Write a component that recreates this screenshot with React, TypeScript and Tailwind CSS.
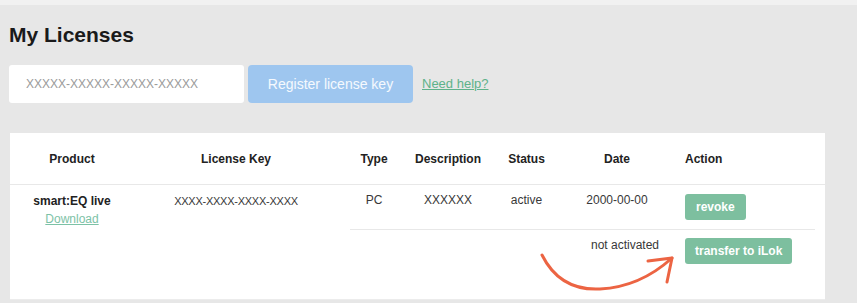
import React from "react";

const headers = [
  { label: "Product", align: "text-center" },
  { label: "License Key", align: "text-center" },
  { label: "Type", align: "text-center" },
  { label: "Description", align: "text-center" },
  { label: "Status", align: "text-center" },
  { label: "Date", align: "text-center" },
  { label: "Action", align: "text-left pl-[18px]" },
];

function Arrow() {
  return (
    <svg
      className="pointer-events-none absolute left-[520px] top-[110px]"
      width="160"
      height="60"
      viewBox="0 0 160 60"
      fill="none"
    >
      <path
        d="M12 12 Q30 48 70 46 Q110 44 142 15"
        stroke="#ec6443"
        strokeWidth="3"
        strokeLinecap="round"
      />
      <path
        d="M118 18 L142 15 L137 39"
        stroke="#ec6443"
        strokeWidth="3"
        strokeLinecap="round"
        strokeLinejoin="round"
      />
    </svg>
  );
}

export default function App() {
  return (
    <div
      className="min-h-[303px] w-full bg-[#e7e7e7] text-[12px] text-[#383838]"
      style={{ fontFamily: '"Liberation Sans", Arial, sans-serif' }}
    >
      <div className="h-[5px] bg-[#f1f1f1]" />

      <div className="px-[9px]">
        <h1 className="mt-[18px] text-[21px] font-bold leading-[24px] text-[#1a1a1a]">
          My Licenses
        </h1>

        <div className="mt-[18px] flex items-center">
          <div className="flex h-[38px] w-[235px] items-center rounded-[3px] bg-white pl-[17px] text-[12px] text-[#9a9a9a]">
            XXXXX-XXXXX-XXXXX-XXXXX
          </div>
          <button className="ml-[4px] h-[38px] w-[165px] rounded-[4px] bg-[#9ec6ef] text-[14px] text-white/90">
            Register license key
          </button>
          <a href="#" className="ml-[9px] text-[13px] text-[#5eb28a] underline">
            Need help?
          </a>
        </div>
      </div>

      <div className="relative ml-[10px] mt-[30px] w-[815px] border-b border-[#ececec] bg-white">
        <div className="grid h-[52px] grid-cols-[124px_204px_72px_76px_81px_100px_1fr] items-center border-b border-[#e8e8e8]">
          {headers.map((h) => (
            <div key={h.label} className={`font-bold text-[#222] ${h.align}`}>
              {h.label}
            </div>
          ))}
        </div>

        <div className="grid grid-cols-[124px_204px_72px_76px_81px_100px_1fr] leading-[16px]">
          <div className="row-span-2 flex flex-col items-center pt-[7px] leading-[18px]">
            <span className="font-bold text-[#222]">smart:EQ live</span>
            <a href="#" className="text-[#7cc2a6] underline">
              Download
            </a>
          </div>
          <div className="row-span-2 pt-[8px] text-center text-[11px] tracking-[-0.25px]">
            XXXX-XXXX-XXXX-XXXX
          </div>
          <div className="h-[44px] pt-[7px] text-center">PC</div>
          <div className="pt-[7px] text-center">XXXXXX</div>
          <div className="pt-[7px] text-center">active</div>
          <div className="pt-[7px] text-center">2000-00-00</div>
          <div className="pl-[18px] pt-[9px]">
            <button className="h-[26px] rounded-[3px] bg-[#7dbf9f] px-[11px] font-bold text-white">
              revoke
            </button>
          </div>

          <div className="col-span-5 col-start-3 ml-3 mr-[10px] grid h-[70px] grid-cols-[60px_76px_81px_100px_1fr] border-t border-[#e8e8e8]">
            <div />
            <div />
            <div />
            <div className="pr-2 pt-[7px] text-right">not activated</div>
            <div className="pl-[18px] pt-[8px]">
              <button className="h-[26px] rounded-[3px] bg-[#7dbf9f] px-[10px] font-bold text-white">
                transfer to iLok
              </button>
            </div>
          </div>
        </div>

        <Arrow />
      </div>
    </div>
  );
}
